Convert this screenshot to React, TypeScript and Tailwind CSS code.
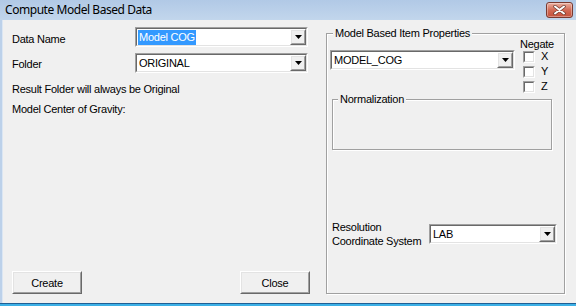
import React from "react";

const ui = { fontFamily: '"Liberation Sans", Arial, sans-serif' };

function Sunken({ className = "", children }: { className?: string; children?: React.ReactNode }) {
  return (
    <div className={`border border-t-[#a0a0a0] border-l-[#a0a0a0] border-b-white border-r-white ${className}`}>
      <div className="flex h-full w-full border border-t-[#696969] border-l-[#696969] border-b-[#e3e3e3] border-r-[#e3e3e3] bg-white">
        {children}
      </div>
    </div>
  );
}

function Raised({ className = "", children }: { className?: string; children?: React.ReactNode }) {
  return (
    <div className={`border border-t-[#ffffff] border-l-[#ffffff] border-b-[#696969] border-r-[#696969] ${className}`}>
      <div className="flex h-full w-full items-center justify-center border border-t-[#e3e3e3] border-l-[#e3e3e3] border-b-[#a0a0a0] border-r-[#a0a0a0] bg-[#f0f0f0]">
        {children}
      </div>
    </div>
  );
}

function Combo({ className = "", children }: { className?: string; children?: React.ReactNode }) {
  return (
    <Sunken className={`h-[20px] ${className}`}>
      <div className="flex min-w-0 flex-1 items-center pl-[1px] text-[11px] leading-[14px] text-black">{children}</div>
      <Raised className="h-[16px] w-[16px] shrink-0">
        <svg width="7" height="4" viewBox="0 0 7 4">
          <path d="M0 0H7L3.5 4Z" fill="#000" />
        </svg>
      </Raised>
    </Sunken>
  );
}

function Check({ label }: { label: string }) {
  return (
    <div className="flex h-[15px] items-start gap-[6px]">
      <Sunken className="h-[12px] w-[12px]" />
      <span className="-mt-[2px] text-[11px] leading-[14px]">{label}</span>
    </div>
  );
}

function Button({ label }: { label: string }) {
  return (
    <Raised className="h-[23px] w-[70px]">
      <span className="text-[11px] leading-[14px] text-black">{label}</span>
    </Raised>
  );
}

export default function App() {
  return (
    <div className="flex h-[306px] w-[576px] flex-col overflow-hidden bg-[#f0f0f0] tracking-[-0.25px] text-black" style={ui}>
      {/* title bar */}
      <div className="flex h-[20px] shrink-0 items-center justify-between bg-gradient-to-b from-[#b1c9e6] to-[#c2d6ec] pl-[5px] pr-[3px]">
        <span className="text-[12px] leading-[16px] tracking-[-0.45px] text-black" style={{ fontFamily: '"Noto Sans", "Open Sans", sans-serif' }}>
          Compute Model Based Data
        </span>
        <div className="flex h-[16px] w-[27px] items-center justify-center rounded-[3px] border border-[#7a3a30] bg-gradient-to-b from-[#eab0a2] via-[#d26a55] to-[#c4503a] shadow-[inset_0_0_0_1px_rgba(255,255,255,0.35)]">
          <svg width="13" height="10" viewBox="0 0 13 10">
            <path d="M2 1.5L11 8.5M11 1.5L2 8.5" stroke="#6a3a30" strokeWidth="3.4" strokeLinecap="round" />
            <path d="M2 1.5L11 8.5M11 1.5L2 8.5" stroke="#ffffff" strokeWidth="2" strokeLinecap="round" />
          </svg>
        </div>
      </div>

      {/* body */}
      <div className="flex min-h-0 flex-1">
        <div className="w-[3px] shrink-0 border-r border-[#dbe6f3] bg-[#bcd1ea]" />
        <div className="flex flex-1 pl-[9px]">
          {/* left column */}
          <div className="flex w-[298px] flex-col pt-[7px] pb-[9px]">
            <div className="flex h-[20px] items-start">
              <span className="mt-[5px] w-[123px] text-[11px] leading-[14px]">Data Name</span>
              <Combo className="w-[173px]">
                <span className="h-[15px] bg-[#3399ff] px-[1px] leading-[15px] text-white">Model COG</span>
              </Combo>
            </div>
            <div className="mt-[6px] flex h-[20px] items-start">
              <span className="mt-[4px] w-[123px] text-[11px] leading-[14px]">Folder</span>
              <Combo className="w-[173px]">
                <span className="pl-[1px]">ORIGINAL</span>
              </Combo>
            </div>
            <div className="mt-[9px] text-[11px] leading-[14px]">Result Folder will always be Original</div>
            <div className="mt-[6px] text-[11px] leading-[14px]">Model Center of Gravity:</div>
            <div className="flex-1" />
            <div className="flex items-end justify-between">
              <Button label="Create" />
              <Button label="Close" />
            </div>
          </div>

          {/* right group */}
          <fieldset className="mt-[6px] ml-[16px] h-[268px] w-[239px] shrink-0 border border-[#a0a0a0] shadow-[inset_1px_1px_0_#ffffff,1px_1px_0_#ffffff]">
            <legend className="ml-[6px] bg-[#f0f0f0] px-[2px] text-[11px] leading-[14px]">Model Based Item Properties</legend>
            <div className="flex items-start pl-[3px]">
              <Combo className="mt-[10px] w-[185px]">
                <span className="pl-[1px]">MODEL_COG</span>
              </Combo>
              <div className="-mt-[3px] ml-[5px] flex flex-col">
                <span className="text-[11px] leading-[14px]">Negate</span>
                <div className="ml-[3px]">
                  <Check label="X" />
                  <Check label="Y" />
                  <Check label="Z" />
                </div>
              </div>
            </div>
            <fieldset className="-mt-[4px] ml-[5px] h-[58px] w-[220px] border border-[#a0a0a0] shadow-[inset_1px_1px_0_#ffffff,1px_1px_0_#ffffff]">
              <legend className="ml-[5px] bg-[#f0f0f0] px-[2px] text-[11px] leading-[14px]">Normalization</legend>
            </fieldset>
            <div className="mt-[70px] ml-[5px] flex items-center">
              <div className="w-[97px] text-[11px] leading-[14px]">
                <div>Resolution</div>
                <div>Coordinate System</div>
              </div>
              <Combo className="w-[128px]">
                <span className="pl-[1px]">LAB</span>
              </Combo>
            </div>
          </fieldset>
        </div>
      </div>

      {/* bottom frame */}
      <div className="h-[3px] shrink-0 border-t border-[#1f5f95] bg-[#3cb0e6]" />
    </div>
  );
}
